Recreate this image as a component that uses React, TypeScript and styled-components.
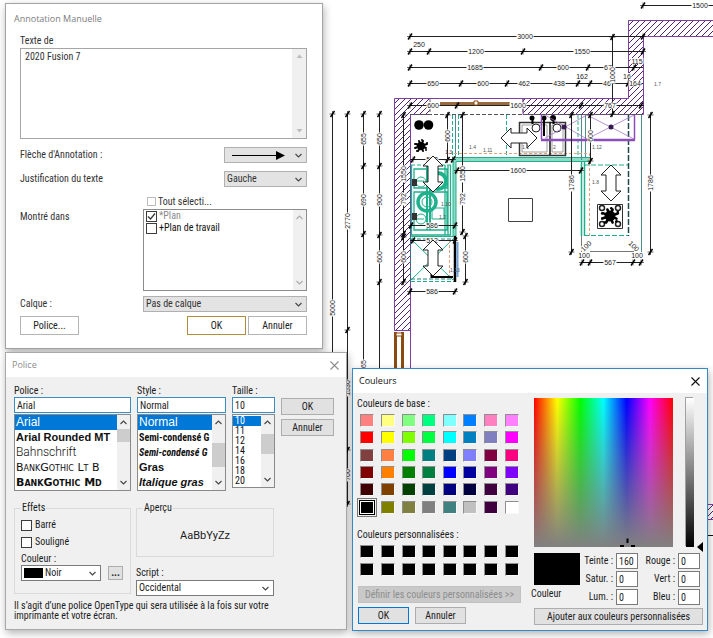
import React from 'react';
import styled, { createGlobalStyle, css } from 'styled-components';

const ui = '"Roboto Condensed", Roboto, "Liberation Sans", sans-serif';
const heading = '"Open Sans", "Noto Sans", sans-serif';
const arial = '"Liberation Sans", Arial, sans-serif';

const GlobalStyle = createGlobalStyle`
  *, *::before, *::after { box-sizing: border-box; }
  body { margin: 0; background: #fff; color: #1c1c1c; font: 10px/12px ${ui}; }
  button, input, select, textarea { font: inherit; color: inherit; margin: 0; border-radius: 0; outline: none; }
  h2, p, ul, fieldset { margin: 0; padding: 0; }
`;

/* ---------- shared parts ---------- */

const Desktop = styled.main`
  position: relative;
  min-height: 100vh;
  overflow: hidden;
`;

const PlanCanvas = styled.svg`
  position: absolute;
  top: 0;
  left: 0;
  font-family: ${arial};
`;

const DialogWindow = styled.section<{ $x: number; $y: number; $w: number; $edge: string; $fill: string }>`
  position: absolute;
  left: ${(p) => p.$x}px;
  top: ${(p) => p.$y}px;
  width: ${(p) => p.$w}px;
  background: ${(p) => p.$fill};
  border: 1px solid ${(p) => p.$edge};
  box-shadow: 1px 3px 8px rgba(0, 0, 0, 0.3);
`;

const TitleBar = styled.header<{ $muted?: boolean }>`
  display: flex;
  align-items: center;
  justify-content: space-between;
  height: 24px;
  padding: 0 6px;
  background: #fff;
  font-family: ${heading};
  color: ${(p) => (p.$muted ? '#8c8c8c' : '#111')};
`;

const Title = styled.h2`
  font: 9px/14px ${heading};
`;

const CloseButton = styled.button`
  display: flex;
  padding: 1px;
  border: 0;
  background: none;
  color: inherit;
`;

const PushButton = styled.button<{ $flat?: boolean; $accent?: string; $off?: boolean; $h?: number }>`
  height: ${(p) => p.$h ?? 17}px;
  padding: 0 2px;
  line-height: 12px;
  white-space: nowrap;
  border: 1px solid ${(p) => p.$accent ?? (p.$flat ? '#b4b4b4' : '#adadad')};
  background: ${(p) => (p.$flat ? '#fff' : '#e1e1e1')};
  color: #222;
  ${(p) => p.$off && css`
    background: #c9c9c9;
    border-color: #c1c1c1;
    color: #8d8d8d;
  `}
`;

const TextInput = styled.input<{ $edge?: string }>`
  width: 100%;
  min-width: 0;
  height: 16px;
  padding: 0 2px;
  background: #fff;
  border: 1px solid ${(p) => p.$edge ?? '#7a7a7a'};
`;

const SelectBox = styled.span<{ $grey?: boolean }>`
  display: flex;
  align-items: center;
  height: 16px;
  padding-right: 4px;
  border: 1px solid ${(p) => (p.$grey ? '#b0b0b0' : '#7a7a7a')};
  background: ${(p) => (p.$grey ? '#e3e3e3' : '#fff')};
`;

const Select = styled.select`
  appearance: none;
  flex: 1;
  min-width: 0;
  height: 14px;
  padding: 0 2px;
  border: 0;
  background: none;
`;

const TickBox = styled.input<{ $size: number; $pale?: boolean }>`
  appearance: none;
  flex: none;
  width: ${(p) => p.$size}px;
  height: ${(p) => p.$size}px;
  background: #fff;
  border: 1px solid ${(p) => (p.$pale ? '#bdbdbd' : '#3c3c3c')};
  &:checked {
    background: #fff url("data:image/svg+xml,%3Csvg xmlns='http://www.w3.org/2000/svg' viewBox='0 0 9 9'%3E%3Cpath d='M1 4.5 3.5 7 8 1.5' fill='none' stroke='%23333' stroke-width='1.2'/%3E%3C/svg%3E") center / 100%;
  }
`;

const TickLabel = styled.label<{ $muted?: boolean; $gap?: number }>`
  display: flex;
  align-items: center;
  gap: ${(p) => p.$gap ?? 2}px;
  color: ${(p) => (p.$muted ? '#8a8a8a' : 'inherit')};
`;

const ScrollTrack = styled.span<{ $w?: number }>`
  display: flex;
  flex-direction: column;
  align-items: center;
  flex: none;
  width: ${(p) => p.$w ?? 13}px;
  padding: 5px 0;
  background: #f0f0f0;
`;

const Thumb = styled.span<{ $h: number; $before: number }>`
  width: 100%;
  height: ${(p) => p.$h}px;
  margin-top: ${(p) => p.$before}px;
  background: #cdcdcd;
`;

const TrackSpace = styled.span`
  flex: 1;
`;

const Chevron = ({ up, color = '#444' }: { up?: boolean; color?: string }) => (
  <svg width="7" height="5" viewBox="0 0 7 5" fill="none" stroke={color} strokeWidth="1.1" aria-hidden="true">
    <path d={up ? 'M0.5 4 3.5 1 6.5 4' : 'M0.5 1 3.5 4 6.5 1'} />
  </svg>
);

const Triangle = ({ up }: { up?: boolean }) => (
  <svg width="7" height="4" viewBox="0 0 7 4" fill="#bcbcbc" aria-hidden="true">
    <path d={up ? 'M0.5 4 3.5 0.5 6.5 4z' : 'M0.5 0 3.5 3.5 6.5 0z'} />
  </svg>
);

const CloseIcon = () => (
  <svg width="9" height="9" viewBox="0 0 9 9" stroke="currentColor" strokeWidth="1.1" aria-hidden="true">
    <path d="M0.5 0.5 8.5 8.5M8.5 0.5 0.5 8.5" />
  </svg>
);

/* ---------- annotation dialog ---------- */

const AnnotationTitle = styled(Title)`
  padding: 8px 8px 0;
  color: #7c7c7c;
`;

const AnnotationBody = styled.div`
  display: flex;
  flex-direction: column;
  padding: 9px 15px 13px 14px;
  color: #333;
`;

const MemoFrame = styled.div`
  display: flex;
  height: 91px;
  margin: 1px 0 8px;
  border: 1px solid #a6a6a6;
`;

const Memo = styled.textarea`
  flex: 1;
  min-width: 0;
  padding: 2px 4px;
  border: 0;
  background: none;
  resize: none;
  overflow: hidden;
`;

const SettingRow = styled.div`
  display: grid;
  grid-template-columns: 1fr 83px;
  align-items: center;
  margin-bottom: 8px;
`;

const ViewsGrid = styled.div`
  display: grid;
  grid-template-columns: 123px 1fr;
  row-gap: 1px;
`;

const AllViews = styled(TickLabel)`
  grid-column: 2;
  height: 13px;
  padding-left: 4px;
`;

const CellLabel = styled.span`
  padding-top: 2px;
`;

const ViewsList = styled.div`
  display: flex;
  height: 82px;
  border: 1px solid #8c8c8c;
`;

const ViewsItems = styled.div`
  flex: 1;
  padding: 0 2px;
  color: #111;
`;

const LayerRow = styled.div`
  display: grid;
  grid-template-columns: 123px 1fr;
  align-items: center;
  margin: 5px 0 4px;
`;

const ButtonRow = styled.div`
  display: grid;
  grid-template-columns: 59px 1fr 59px 59px;
  column-gap: 2px;
`;

const Spacer = styled.span``;

const ArrowSample = styled.svg`
  flex: none;
  margin-left: 7px;
`;

const HiddenTextSelect = styled(Select)`
  color: transparent;
`;

function AnnotationDialog() {
  return (
    <DialogWindow $x={5} $y={3} $w={318} $edge="#a3a3a3" $fill="#fff">
      <AnnotationTitle>Annotation Manuelle</AnnotationTitle>
      <AnnotationBody>
        <label htmlFor="memo">Texte de</label>
        <MemoFrame>
          <Memo id="memo" defaultValue="2020 Fusion 7" />
          <ScrollTrack $w={14}>
            <Triangle up />
            <TrackSpace />
            <Triangle />
          </ScrollTrack>
        </MemoFrame>
        <SettingRow>
          <label htmlFor="arrow">Flèche d'Annotation :</label>
          <SelectBox $grey>
            <ArrowSample width="54" height="9" viewBox="0 0 54 9" aria-hidden="true">
              <path d="M0 4.5H46" stroke="#000" />
              <path d="M44 0 53 4.5 44 9z" />
            </ArrowSample>
            <HiddenTextSelect id="arrow" />
            <Chevron />
          </SelectBox>
        </SettingRow>
        <SettingRow>
          <label htmlFor="justify">Justification du texte</label>
          <SelectBox $grey>
            <Select id="justify"><option>Gauche</option></Select>
            <Chevron />
          </SelectBox>
        </SettingRow>
        <ViewsGrid>
          <AllViews><TickBox type="checkbox" $size={9} $pale />Tout sélecti...</AllViews>
          <CellLabel>Montré dans</CellLabel>
          <ViewsList>
            <ViewsItems>
              <TickLabel $muted><TickBox type="checkbox" $size={11} defaultChecked />*Plan</TickLabel>
              <TickLabel><TickBox type="checkbox" $size={11} />+Plan de travail</TickLabel>
            </ViewsItems>
            <ScrollTrack>
              <Chevron up color="#aaa" />
              <TrackSpace />
              <Chevron color="#aaa" />
            </ScrollTrack>
          </ViewsList>
        </ViewsGrid>
        <LayerRow>
          <label htmlFor="layer">Calque :</label>
          <SelectBox $grey>
            <Select id="layer"><option>Pas de calque</option></Select>
            <Chevron />
          </SelectBox>
        </LayerRow>
        <ButtonRow>
          <PushButton $flat $h={19}>Police...</PushButton>
          <Spacer />
          <PushButton $flat $h={19} $accent="#b08d3c">OK</PushButton>
          <PushButton $flat $h={19}>Annuler</PushButton>
        </ButtonRow>
      </AnnotationBody>
    </DialogWindow>
  );
}

/* ---------- font dialog ---------- */

const FontBody = styled.div`
  padding: 8px 12px 8px 8px;
`;

const FontColumns = styled.div`
  display: grid;
  grid-template-columns: 117px 89px 43px 53px;
  column-gap: 6px;
  align-items: start;
`;

const FontColumn = styled.div`
  display: flex;
  flex-direction: column;
`;

const DialogButtons = styled.div`
  display: flex;
  flex-direction: column;
  gap: 4px;
  padding-top: 13px;
`;

const ListFrame = styled.div<{ $h: number }>`
  display: flex;
  height: ${(p) => p.$h}px;
  margin-top: 1px;
  background: #fff;
  border: 1px solid #8a8a8a;
`;

const ListItems = styled.ul`
  flex: 1;
  min-width: 0;
  overflow: hidden;
  list-style: none;
`;

type Face = 'sans' | 'bold' | 'light' | 'caps' | 'capsBold' | 'semi' | 'semiItalic' | 'boldItalic';

const faces: Record<Face, string> = {
  sans: `400 12px/15px ${arial}`,
  bold: `700 11px/15px ${arial}`,
  light: `300 12px/15px Roboto, sans-serif`,
  caps: `400 small-caps 11px/15px "DejaVu Sans", sans-serif`,
  capsBold: `700 small-caps 11px/15px "DejaVu Sans", sans-serif`,
  semi: `700 10px/15px ${ui}`,
  semiItalic: `italic 700 10px/15px ${ui}`,
  boldItalic: `italic 700 11px/15px ${arial}`,
};

const FaceItem = styled.li<{ $face: Face; $on?: boolean }>`
  height: 15px;
  padding-left: 1px;
  font: ${(p) => faces[p.$face]};
  white-space: nowrap;
  background: ${(p) => (p.$on ? '#0078d7' : 'none')};
  color: ${(p) => (p.$on ? '#fff' : '#111')};
`;

const SizeItem = styled.li<{ $on?: boolean }>`
  height: 10px;
  padding-left: 2px;
  font: 10px/10px ${ui};
  background: ${(p) => (p.$on ? '#0078d7' : 'none')};
  color: ${(p) => (p.$on ? '#fff' : '#111')};
`;

const SizeItems = styled(ListItems)`
  padding-top: 1px;
`;

const OptionColumns = styled.div`
  display: grid;
  grid-template-columns: 117px 138px;
  column-gap: 5px;
  margin-top: 11px;
`;

const Group = styled.fieldset<{ $h: number }>`
  min-width: 0;
  height: ${(p) => p.$h}px;
  padding: 5px 6px 0;
  border: 1px solid #dadada;
`;

const Legend = styled.legend`
  padding: 0 1px;
`;

const Effects = styled.div`
  display: flex;
  flex-direction: column;
  gap: 5px;
`;

const ColorRow = styled.div`
  display: grid;
  grid-template-columns: 80px 15px;
  column-gap: 7px;
  align-items: center;
`;

const MoreButton = styled(PushButton)`
  font-weight: 700;
`;

const InkSwatch = styled.span`
  width: 19px;
  height: 10px;
  margin-left: 2px;
  background: #000;
`;

const Sample = styled.p`
  padding-top: 10px;
  text-align: center;
  font: 11px/14px Roboto, sans-serif;
`;

const ScriptArea = styled.div`
  display: flex;
  flex-direction: column;
  gap: 1px;
  margin-top: 10px;
`;

const Note = styled.p`
  margin-top: 5px;
  line-height: 10px;
`;

const fontList: [string, Face][] = [
  ['Arial', 'sans'],
  ['Arial Rounded MT', 'bold'],
  ['Bahnschrift', 'light'],
  ['BankGothic Lt B', 'caps'],
  ['BankGothic Md', 'capsBold'],
];
const styleList: [string, Face][] = [
  ['Normal', 'sans'],
  ['Semi-condensé G', 'semi'],
  ['Semi-condensé G', 'semiItalic'],
  ['Gras', 'bold'],
  ['Italique gras', 'boldItalic'],
];
const sizeList = ['10', '11', '12', '14', '16', '18', '20'];
const edge = '#3c8dc4';

function FontDialog() {
  return (
    <DialogWindow $x={5} $y={352} $w={342} $edge="#a8a8a8" $fill="#f0f0f0">
      <TitleBar $muted>
        <Title>Police</Title>
        <CloseButton aria-label="Fermer"><CloseIcon /></CloseButton>
      </TitleBar>
      <FontBody>
        <FontColumns>
          <FontColumn>
            <label htmlFor="face">Police :</label>
            <TextInput id="face" defaultValue="Arial" $edge={edge} />
            <ListFrame $h={77}>
              <ListItems>
                {fontList.map(([name, face], i) => <FaceItem key={name} $face={face} $on={i === 0}>{name}</FaceItem>)}
              </ListItems>
              <ScrollTrack>
                <Chevron up />
                <Thumb $h={13} $before={4} />
                <TrackSpace />
                <Chevron />
              </ScrollTrack>
            </ListFrame>
          </FontColumn>
          <FontColumn>
            <label htmlFor="variant">Style :</label>
            <TextInput id="variant" defaultValue="Normal" $edge={edge} />
            <ListFrame $h={77}>
              <ListItems>
                {styleList.map(([name, face], i) => <FaceItem key={i} $face={face} $on={i === 0}>{name}</FaceItem>)}
              </ListItems>
              <ScrollTrack>
                <Chevron up />
                <Thumb $h={24} $before={18} />
                <TrackSpace />
                <Chevron />
              </ScrollTrack>
            </ListFrame>
          </FontColumn>
          <FontColumn>
            <label htmlFor="size">Taille :</label>
            <TextInput id="size" defaultValue="10" $edge={edge} />
            <ListFrame $h={74}>
              <SizeItems>
                {sizeList.map((s, i) => <SizeItem key={s} $on={i === 0}>{s}</SizeItem>)}
              </SizeItems>
              <ScrollTrack>
                <Chevron up />
                <Thumb $h={20} $before={9} />
                <TrackSpace />
                <Chevron />
              </ScrollTrack>
            </ListFrame>
          </FontColumn>
          <DialogButtons>
            <PushButton>OK</PushButton>
            <PushButton>Annuler</PushButton>
          </DialogButtons>
        </FontColumns>
        <OptionColumns>
          <Group $h={92}>
            <Legend>Effets</Legend>
            <Effects>
              <TickLabel $gap={3}><TickBox type="checkbox" $size={11} />Barré</TickLabel>
              <TickLabel $gap={3}><TickBox type="checkbox" $size={11} />Souligné</TickLabel>
              <label htmlFor="ink">Couleur :</label>
            </Effects>
            <ColorRow>
              <SelectBox>
                <InkSwatch />
                <Select id="ink"><option>Noir</option></Select>
                <Chevron />
              </SelectBox>
              <MoreButton $h={14} aria-label="Autres couleurs">...</MoreButton>
            </ColorRow>
          </Group>
          <FontColumn>
            <Group $h={55}>
              <Legend>Aperçu</Legend>
              <Sample>AaBbYyZz</Sample>
            </Group>
            <ScriptArea>
              <label htmlFor="script">Script :</label>
              <SelectBox>
                <Select id="script"><option>Occidental</option></Select>
                <Chevron />
              </SelectBox>
            </ScriptArea>
          </FontColumn>
        </OptionColumns>
        <Note>
          Il s’agit d’une police OpenType qui sera utilisée à la fois sur votre<br />
          imprimante et votre écran.
        </Note>
      </FontBody>
    </DialogWindow>
  );
}

/* ---------- colour dialog ---------- */

const ColorBody = styled.div`
  display: grid;
  grid-template-columns: 165px 169px;
  column-gap: 12px;
  padding: 5px 4px 5px 4px;
`;

const PaletteSide = styled.div`
  display: flex;
  flex-direction: column;
`;

const Palette = styled.div<{ $h: number }>`
  display: grid;
  grid-template-columns: repeat(8, 1fr);
  grid-auto-rows: 1fr;
  place-items: center;
  height: ${(p) => p.$h}px;
  margin: 2px 0 13px;
`;

const Swatch = styled.button<{ $color: string; $on?: boolean }>`
  width: 14px;
  height: 13px;
  padding: 0;
  background: ${(p) => p.$color};
  border: 1px solid;
  border-color: #8f8f8f #f8f8f8 #f8f8f8 #8f8f8f;
  ${(p) => p.$on && css`
    border-color: #fff;
    outline: 1px solid #000;
    box-shadow: 0 0 0 2px #f0f0f0, 0 0 0 3px #777;
  `}
`;

const CustomPalette = styled(Palette)`
  margin: 2px 0 8px;
`;

const PaletteButtons = styled.div`
  display: grid;
  grid-template-columns: 51px 51px;
  column-gap: 6px;
  margin: 4px 1px 0;
`;

const DefineButton = styled(PushButton)`
  margin: 0 1px;
`;

const MixerSide = styled.div`
  display: flex;
  flex-direction: column;
`;

const Spectra = styled.div`
  display: grid;
  grid-template-columns: 139px 8px 8px;
  column-gap: 13px;
  height: 149px;
`;

const HueField = styled.div`
  position: relative;
  background:
    linear-gradient(to bottom, rgba(128, 128, 128, 0), #808080),
    linear-gradient(to right, #f00, #ff0, #0f0, #0ff, #00f, #f0f, #f00);
`;

const HueCursor = styled.svg`
  position: absolute;
  left: 62%;
  bottom: 0;
`;

const LumBar = styled.div`
  background: linear-gradient(#fff, #000);
  box-shadow: -1px -1px 0 #a0a0a0;
`;

const LumPointer = styled.svg`
  align-self: end;
  justify-self: start;
  margin: 0 0 -5px -10px;
`;

const Mixer = styled.div`
  display: grid;
  grid-template-columns: 46px 30px 22px 34px 22px;
  column-gap: 3px;
  row-gap: 2px;
  align-items: center;
  margin-top: 6px;
`;

const CurrentColor = styled.div`
  grid-row: 1 / 3;
  align-self: start;
  height: 32px;
  background: #000;
`;

const CurrentLabel = styled.span`
  align-self: start;
  margin: -1px 0 0 -3px;
`;

const FieldLabel = styled.label`
  text-align: right;
`;

const AddButton = styled(PushButton)`
  margin-top: 3px;
`;

const baseColors = [
  '#ff8080', '#ffff80', '#80ff80', '#00ff80', '#80ffff', '#0080ff', '#ff80c0', '#ff80ff',
  '#ff0000', '#ffff00', '#80ff00', '#00ff40', '#00ffff', '#0080c0', '#8080c0', '#ff00ff',
  '#804040', '#ff8040', '#00ff00', '#008080', '#004080', '#8080ff', '#800040', '#ff0080',
  '#800000', '#ff8000', '#008000', '#008040', '#0000ff', '#0000a0', '#800080', '#8000ff',
  '#400000', '#804000', '#004000', '#004040', '#000080', '#000040', '#400040', '#400080',
  '#000000', '#808000', '#808040', '#808080', '#408080', '#c0c0c0', '#400040', '#ffffff',
];
const customColors = Array.from({ length: 16 }, () => '#000000');

const channels: [string, string, string][] = [
  ['hue', 'Teinte :', '160'],
  ['red', 'Rouge :', '0'],
  ['sat', 'Satur. :', '0'],
  ['green', 'Vert :', '0'],
  ['lum', 'Lum. :', '0'],
  ['blue', 'Bleu :', '0'],
];

function ColorDialog() {
  const field = ([id, label, value]: [string, string, string]) => (
    <React.Fragment key={id}>
      <FieldLabel htmlFor={id}>{label}</FieldLabel>
      <TextInput id={id} defaultValue={value} />
    </React.Fragment>
  );
  return (
    <DialogWindow $x={352} $y={368} $w={356} $edge="#3289c4" $fill="#f0f0f0">
      <TitleBar>
        <Title>Couleurs</Title>
        <CloseButton aria-label="Fermer"><CloseIcon /></CloseButton>
      </TitleBar>
      <ColorBody>
        <PaletteSide>
          <span>Couleurs de base :</span>
          <Palette $h={104}>
            {baseColors.map((c, i) => <Swatch key={i} $color={c} $on={i === 40} aria-label={c} />)}
          </Palette>
          <span>Couleurs personnalisées :</span>
          <CustomPalette $h={35}>
            {customColors.map((c, i) => <Swatch key={i} $color={c} aria-label={c} />)}
          </CustomPalette>
          <DefineButton $off>Définir les couleurs personnalisées &gt;&gt;</DefineButton>
          <PaletteButtons>
            <PushButton $accent="#0078d7">OK</PushButton>
            <PushButton>Annuler</PushButton>
          </PaletteButtons>
        </PaletteSide>
        <MixerSide>
          <Spectra>
            <HueField>
              <HueCursor width="15" height="9" viewBox="0 0 15 9" stroke="#000" strokeWidth="2" aria-hidden="true">
                <path d="M7.5 0.5V5M0 8H4M11 8H15" />
              </HueCursor>
            </HueField>
            <LumBar />
            <LumPointer width="6" height="10" viewBox="0 0 6 10" aria-hidden="true"><path d="M6 0V10L0 5z" /></LumPointer>
          </Spectra>
          <Mixer>
            <CurrentColor />
            {channels.slice(0, 4).map(field)}
            <CurrentLabel>Couleur</CurrentLabel>
            {channels.slice(4).map(field)}
          </Mixer>
          <AddButton>Ajouter aux couleurs personnalisées</AddButton>
        </MixerSide>
      </ColorBody>
    </DialogWindow>
  );
}

/* ---------- kitchen plan ---------- */

const DimText = styled.text`
  font-size: 7px;
  fill: #222;
  text-anchor: middle;
`;

const TagText = styled.text`
  font-size: 5px;
  fill: #555;
`;

type LabelAt = [number, string];

const Label = ({ x, y, text, turn = 0 }: { x: number; y: number; text: string; turn?: number }) => {
  const w = text.length * 4 + 1;
  return (
    <g transform={`translate(${x} ${y}) rotate(${turn})`}>
      <rect x={-w / 2} y={-3} width={w} height={6} fill="#fff" />
      <DimText y={2.5}>{text}</DimText>
    </g>
  );
};

const Tick = ({ x, y }: { x: number; y: number }) => (
  <g stroke="#000">
    <path d={`M${x - 2} ${y + 3}L${x + 2} ${y - 3}`} strokeWidth="1.4" />
    <path d={`M${x} ${y - 3}V${y + 3}M${x - 3} ${y}H${x + 3}`} strokeWidth="0.6" />
  </g>
);

/* A dimension chain: `at` is its fixed coordinate, `from`/`to` its extent. */
const Chain = ({ vertical, at, from, to, ticks, labels }: {
  vertical?: boolean; at: number; from: number; to: number; ticks: number[]; labels: LabelAt[];
}) => (
  <g>
    <path d={vertical ? `M${at} ${from}V${to}` : `M${from} ${at}H${to}`} stroke="#222" strokeWidth="1" />
    {ticks.map((t) => <Tick key={t} x={vertical ? at : t} y={vertical ? t : at} />)}
    {labels.map(([p, text]) => (
      <Label key={`${p}${text}`} x={vertical ? at : p} y={vertical ? p : at} text={text} turn={vertical ? -90 : 0} />
    ))}
  </g>
);

const DoubleArrow = ({ x, y, across }: { x: number; y: number; across?: boolean }) => (
  <path
    transform={`translate(${x} ${y}) rotate(${across ? 90 : 0})`}
    d="M0 -18L10 -8H5V8H10L0 18L-10 8H-5V-8H-10Z"
    fill="#fff" stroke="#222" strokeWidth="1"
  />
);

const Plant = ({ x, y, s = 1 }: { x: number; y: number; s?: number }) => (
  <g transform={`translate(${x} ${y}) scale(${s})`} fill="#000">
    <circle r="4.2" />
    <path
      d="M0 0L-5 -2M0 0L-2 -5M0 0L2 -5M0 0L6 -2M0 0L5 2M0 0L2 5M0 0L-3 5M0 0L-6 2"
      stroke="#000" strokeWidth="2" strokeLinecap="round"
    />
    <circle cx="-6" cy="-2" r="1" /><circle cx="6" cy="-3" r="1" /><circle cx="1" cy="-6" r="1" />
    <circle cx="5" cy="4" r="1" /><circle cx="-4" cy="5" r="1" />
  </g>
);

const teal = '#1fb08c';

function KitchenPlan() {
  return (
    <PlanCanvas width="713" height="638" viewBox="0 0 713 638" fill="none" role="img" aria-label="Plan de cuisine">
      <defs>
        <pattern id="hatch" width="6" height="6" patternUnits="userSpaceOnUse">
          <path d="M-1 1L1 -1M0 6L6 0M5 7L7 5" stroke="#54246f" strokeWidth="1" />
        </pattern>
      </defs>

      <g fill="url(#hatch)" stroke="#7d3fa6">
        <path d="M713 20.500H628.500V98.500H523V114.500H643.500V36.500H713" />
        <path d="M430 98.500H394.500V330.500H410.500V114.500H430" />
        <path d="M713 504.500H706V519.500H713" />
      </g>
      <path d="M430 98.500H523M410.500 330V370" stroke="#7d3fa6" />
      <path d="M430 99V114M523 99V114" stroke="#666" strokeDasharray="3 2" />
      <path d="M706 535.500H713" stroke="#111" />
      <path d="M410 114.500H642" stroke="#555" strokeDasharray="4 2" />

      <path d="M395.500 332V370M402.500 332V370" stroke="#8a4b10" strokeWidth="3" />
      <path d="M396 333H402V336H396z" fill="#fff" stroke="#8a4b10" />

      {/* worktops and units */}
      <g stroke={teal}>
        <path d="M411 165H453M411 281.500H456M452.500 115V160M458.500 115V158M506.500 115V158M578 115V158" strokeDasharray="4 2" />
        <path d="M454 157.500H590V161.500H456V236H453V161" fill="#8fd9c6" />
        <path d="M581.500 161V236M584.500 161V236" strokeWidth="1.5" />
        <path d="M584 165H628M584 235.500H628" strokeDasharray="5 2" />
        <path d="M411.500 165V235H450.500V165M414 169H447V188H414zM414 192H447V230H414zM445 165V235M448 165V235" strokeWidth="1.3" />
        <path d="M427 165V230M430 165V230" strokeWidth="2" />
        <circle cx="438" cy="181" r="8" strokeWidth="4" />
        <circle cx="427" cy="202" r="9" strokeWidth="3.5" />
        <circle cx="427" cy="202" r="5" />
        <circle cx="421" cy="182" r="5" />
        <circle cx="421" cy="219" r="5" />
        <path d="M413 181H424M413 219H424M432 208H444V219H432z" />
        <path d="M411 236.500H453M411 239L453 280M411 280L453 239" />
      </g>
      <path d="M455.500 115V158M581.500 115V160M585.500 115V158M641.500 115V252" stroke="#4c8d8d" />
      <path d="M410.500 236V283M411 279H454M411 239H454" stroke="#2a7d7d" strokeDasharray="4 2" />
      <path d="M455 236V282" stroke="#000" strokeWidth="2.500" />
      <path d="M457.500 242V277" stroke="#6fa0d8" strokeWidth="2" />
      <path d="M431.500 240V277H453" stroke="#000" strokeWidth="2" />
      <path d="M628.500 115V236" stroke="#1d4a4a" strokeWidth="1.500" strokeDasharray="6 2" />
      <path d="M449 153.500H589.500V236M449.500 240V276" stroke="#e0a27c" strokeDasharray="3 2" />
      <path d="M412 179H417V186H412zM412 213H417V220H412z" fill="#333" />

      {/* sink */}
      <path d="M519.500 122.500H565.500V155.500H519.500z" stroke="#333" strokeWidth="1.500" />
      <path d="M522 125H547V152H522zM552 125H563V152H552z" stroke="#777" strokeWidth="0.7" />
      <path d="M550 122V155" stroke="#111" strokeWidth="1.500" />
      <g fill="#fff" stroke="#222">
        <circle cx="536" cy="128" r="4" />
        <circle cx="557" cy="128" r="4" />
      </g>
      <path d="M532.500 117V124M544 117V136M553.500 116V124" stroke="#000" strokeWidth="2" />
      <g fill="#000">
        <circle cx="532" cy="118" r="2.500" />
        <circle cx="544" cy="118" r="2.500" />
        <circle cx="553" cy="118" r="3" />
      </g>

      {/* wall units */}
      <path d="M541.500 115V139M634.500 115V140" stroke="#8b4db8" strokeWidth="1.500" />
      <path d="M541 140H635" stroke="#8b4db8" strokeWidth="2.500" />
      <path d="M545 138L587 115L634 139M545 115L587 139L634 115" stroke="#a678c6" strokeWidth="0.8" />
      <g fill="#35194d">
        <circle cx="564" cy="127" r="2.500" />
        <circle cx="611" cy="127" r="2.500" />
      </g>

      <g fill="#000">
        <circle cx="419" cy="125" r="4.800" />
        <circle cx="428.500" cy="125" r="4.800" />
      </g>
      <Plant x={421} y={146} />
      <path d="M597.500 204.500H622.500V228.500H597.500z" stroke="#333" fill="#fff" />
      <g stroke="#222" strokeWidth="1.500">
        <circle cx="602" cy="208" r="2.500" /><circle cx="618" cy="208" r="2.500" />
        <circle cx="602" cy="224" r="2.500" /><circle cx="618" cy="224" r="2.500" />
      </g>
      <Plant x={610} y={216} s={1.3} />
      <path d="M508.500 198.500H532.500V221.500H508.500z" stroke="#444" />

      {/* window in the top wall */}
      <path d="M440 103.500H510" stroke="#9a6b3f" strokeWidth="3" />

      <Chain at={5.5} from={643} to={713} ticks={[643]} labels={[[700, '1500']]} />
      <Chain at={36.5} from={410} to={643} ticks={[410, 643]} labels={[[525, '3000']]} />
      <Chain at={51.5} from={410} to={643} ticks={[410, 429, 523, 643]} labels={[[476, '1200'], [582, '1550']]} />
      <Label x={419} y={44.5} text="250" />
      <Chain at={67.5} from={410} to={643} ticks={[410, 541, 588, 634]} labels={[[475, '1685'], [563, '600'], [608, '67']]} />
      <Label x={637} y={61} text="115" />
      <Chain at={83.5} from={410} to={643} ticks={[410, 461, 507, 578, 590, 628]} labels={[[433, '650'], [483, '600'], [524, '462'], [559, '438'], [607, '46'], [635, '164']]} />
      <Label x={582} y={76} text="162" />
      <Label x={627} y={76} text="16" />
      <Chain vertical at={612.5} from={37} to={114} ticks={[37, 114]} labels={[[75, '1000']]} />
      <Chain at={105.5} from={410} to={643} ticks={[410, 457, 581, 641]} labels={[[433, '600'], [518, '1600'], [610, '767']]} />
      <path d="M474 101H478V105H474z" fill="#fff" stroke="#8a4b10" />

      <Chain vertical at={332.5} from={114} to={368} ticks={[114]} labels={[[308, '5000']]} />
      <Chain vertical at={347.5} from={114} to={504} ticks={[114, 330, 450, 504]} labels={[[221, '2770'], [388, '1530'], [475, '700']]} />
      <Chain vertical at={363.5} from={114} to={368} ticks={[114, 166, 234]} labels={[[139, '655'], [200, '690'], [364, '65']]} />
      <Chain vertical at={379.5} from={114} to={368} ticks={[114, 166, 235, 282]} labels={[[139, '650'], [200, '900'], [257, '600']]} />
      <Chain vertical at={403.5} from={115} to={282} ticks={[115, 234, 237, 282]} labels={[[174, '1550'], [199, '792'], [257, '600']]} />
      <Chain vertical at={462.5} from={115} to={234} ticks={[115, 232]} labels={[[174, '1550'], [199, '792']]} />
      <Chain vertical at={465.5} from={236} to={282} ticks={[236, 282]} labels={[[257, '600']]} />
      <Chain vertical at={447.5} from={115} to={160} ticks={[115, 160]} labels={[[136, '600']]} />
      <Chain vertical at={590.5} from={115} to={161} ticks={[115, 161]} labels={[[136, '600']]} />
      <Chain vertical at={571.5} from={115} to={252} ticks={[115, 252]} labels={[[183, '1786']]} />
      <Chain vertical at={650.5} from={115} to={252} ticks={[115, 252]} labels={[[183, '1786']]} />
      <Chain at={159.5} from={411} to={453} ticks={[413, 453]} labels={[[432, '512']]} />
      <Chain at={170.5} from={456} to={581} ticks={[457, 581]} labels={[[518, '1600']]} />
      <Chain at={225.5} from={411} to={456} ticks={[411, 455]} labels={[[432, '586']]} />
      <Chain at={240.5} from={411} to={456} ticks={[413, 455]} labels={[[432, '512']]} />
      <Chain at={291.5} from={410} to={456} ticks={[410, 455]} labels={[[432, '586']]} />
      <Chain at={262.5} from={581} to={641} ticks={[582, 590, 633, 641]} labels={[[610, '567']]} />
      <path d="M590 251.500H634M581.500 236V252" stroke="#777" />
      <Label x={586} y={246} text="100" turn={-45} />
      <Label x={634} y={246} text="100" turn={45} />
      <Label x={584} y={255} text="100" />
      <Label x={637} y={255} text="100" />

      <DoubleArrow x={519} y={138} across />
      <DoubleArrow x={433} y={174} />
      <DoubleArrow x={433} y={258} />
      <DoubleArrow x={611} y={183} />

      <TagText x="654" y="86">1.7</TagText>
      <TagText x="469" y="149">1.4</TagText>
      <TagText x="483" y="152">1.11</TagText>
      <TagText x="445" y="154">1.3</TagText>
      <TagText x="522" y="149">1.1</TagText>
      <TagText x="553" y="149">2</TagText>
      <TagText x="592" y="149">1.12</TagText>
      <TagText x="592" y="184">1.8</TagText>
      <TagText x="441" y="206">1.10</TagText>
      <TagText x="439" y="219">1.2</TagText>
      <TagText x="450" y="272">1.13</TagText>
    </PlanCanvas>
  );
}

export default function App() {
  return (
    <>
      <GlobalStyle />
      <Desktop>
        <KitchenPlan />
        <AnnotationDialog />
        <FontDialog />
        <ColorDialog />
      </Desktop>
    </>
  );
}
